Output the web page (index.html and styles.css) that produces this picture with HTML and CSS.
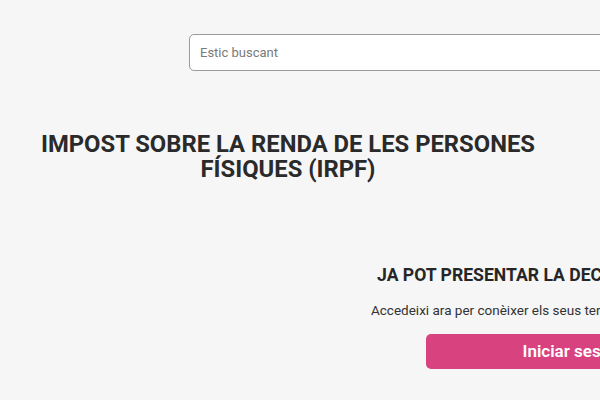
FILE: index.html
```html
<!DOCTYPE html>
<html lang="ca">
<head>
<meta charset="utf-8">
<link rel="stylesheet" href="styles.css">
</head>
<body>
<header class="top">
  <div class="search">
    <input class="search-input" type="text" placeholder="Estic buscant">
  </div>
</header>
<main class="page">
  <section class="intro">
    <h1 class="title">IMPOST SOBRE LA RENDA DE LES PERSONES FÍSIQUES (IRPF)</h1>
  </section>
  <section class="cta">
    <h2 class="cta-title">JA POT PRESENTAR LA DECLARACIÓ</h2>
    <p class="cta-text">Accedeixi ara per conèixer els seus termes</p>
    <a class="cta-button" href="#">Iniciar sessió</a>
  </section>
</main>
</body>
</html>
```
FILE: styles.css
```css
html, body {
  margin: 0;
  padding: 0;
  background: #f6f6f6;
  overflow: hidden;
  width: 600px;
  height: 400px;
}
body {
  font-family: Roboto, "Open Sans", sans-serif;
  color: #2a2a2a;
}
.top {
  padding: 34px 0 0 189px;
}
.search {
  width: 560px;
}
.search-input {
  box-sizing: border-box;
  width: 100%;
  height: 37px;
  border: 1px solid #9a9a9a;
  border-radius: 5px;
  background: #fff;
  padding: 0 10px;
  font-family: inherit;
  font-size: 13px;
  color: #333;
  outline: none;
}
.search-input::placeholder {
  color: #7a7a7a;
}
.page {
  width: 1200px;
}
.intro {
  width: 576px;
  text-align: center;
  padding-top: 61px;
}
.title {
  margin: 0;
  font-size: 23.8px;
  line-height: 25px;
  font-weight: 700;
  color: #2a2a2a;
}
.cta {
  width: 420px;
  margin-left: 371px;
  margin-top: 82px;
  display: flex;
  flex-direction: column;
  align-items: flex-start;
}
.cta-title {
  margin: 0 0 0 6px;
  font-size: 17.6px;
  line-height: 22px;
  font-weight: 700;
  color: #262626;
  white-space: nowrap;
}
.cta-text {
  margin: 15px 0 0;
  font-size: 13.5px;
  line-height: 18px;
  color: #333;
  white-space: nowrap;
}
.cta-button {
  margin: 15px 0 0 55px;
  box-sizing: border-box;
  width: 294px;
  height: 35px;
  border-radius: 5px;
  background: #d8437f;
  color: #fff;
  font-size: 17px;
  font-weight: 600;
  line-height: 35px;
  text-decoration: none;
  text-align: center;
}
```
